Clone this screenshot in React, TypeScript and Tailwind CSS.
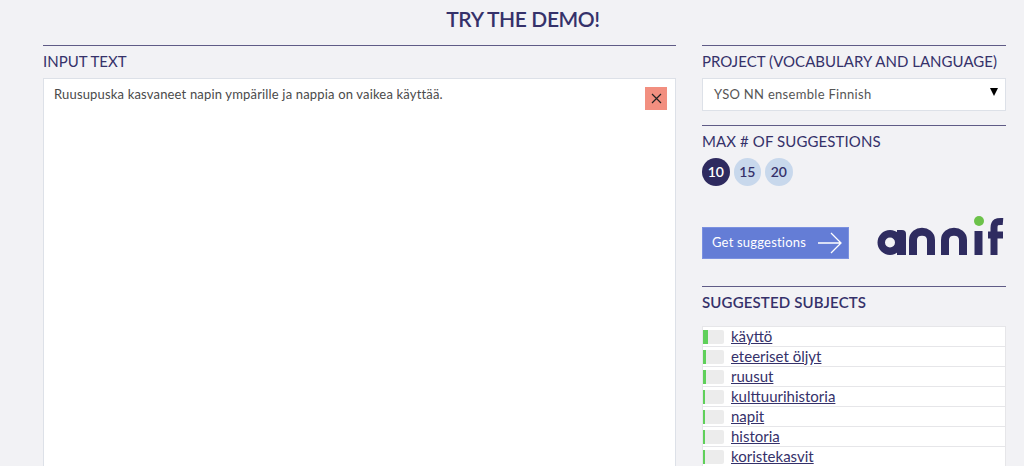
const subjects: [string, number][] = [
  ["käyttö", 5],
  ["eteeriset öljyt", 3],
  ["ruusut", 3],
  ["kulttuurihistoria", 2],
  ["napit", 2],
  ["historia", 1.5],
  ["koristekasvit", 1.5],
];

function Logo() {
  const c = "#2f2c60";
  return (
    <svg width="128" height="44" viewBox="0 0 128 44" className="block">
      <circle cx="13" cy="27.5" r="8.75" fill="none" stroke={c} strokeWidth="7.5" />
      <path d="M20 15h5q4 0 4 4v21h-9z" fill={c} />
      <path d="M36 40V25c0-11 18-11 18 0v15" stroke={c} strokeWidth="8" fill="none" />
      <path d="M68 40V25c0-11 18-11 18 0v15" stroke={c} strokeWidth="8" fill="none" />
      <path d="M101.5 16v24" stroke={c} strokeWidth="8" fill="none" />
      <circle cx="102" cy="6" r="5" fill="#6cc24a" />
      <path d="M117 40V13c0-6 3-7 9-6.5M111 20h15" stroke={c} strokeWidth="7" fill="none" />
    </svg>
  );
}

export default function App() {
  return (
    <div className="h-[466px] overflow-hidden bg-[#f2f2f5] text-[#35316a] font-['Lato','Liberation_Sans',sans-serif]">
      <h2 className="pt-[6px] h-[45px] text-center text-[21px] leading-[26px] font-semibold pl-[22px] tracking-[-0.4px]">TRY THE DEMO!</h2>
      <div className="flex gap-[26px] pl-[43px] pr-[18px]">
        <div className="w-[633px]">
          <div className="border-t border-[#5f5b86] pt-[4px] h-[33px] text-[15px] leading-[22px]">INPUT TEXT</div>
          <div className="relative h-[400px] bg-white border border-[#dde1e8] pl-[10px] pt-[6px] text-[13px] leading-[18px] tracking-[0.17px] text-[#4a4a4a]">
            Ruusupuska kasvaneet napin ympärille ja nappia on vaikea käyttää.
            <div className="absolute right-[8px] top-[8px] w-[22px] h-[23px] bg-[#f28f80] flex items-center justify-center">
              <svg width="11" height="11" viewBox="0 0 11 11"><path d="M1 1l9 9M10 1l-9 9" stroke="#222" strokeWidth="1.2" /></svg>
            </div>
          </div>
        </div>
        <div className="w-[304px]">
          <div className="border-t border-[#5f5b86] pt-[4px] h-[33px] text-[15px] leading-[22px] tracking-[0.03px] whitespace-nowrap">PROJECT (VOCABULARY AND LANGUAGE)</div>
          <div className="relative h-[33px] bg-white border border-[#dde1e8] pl-[11px] text-[13px] leading-[30px] tracking-[0.3px] text-[#555]">
            YSO NN ensemble Finnish
            <span className="absolute right-[7px] top-[9px] w-0 h-0 border-l-[4px] border-r-[4px] border-t-[8px] border-l-transparent border-r-transparent border-t-black"></span>
          </div>
          <div className="mt-[14px] border-t border-[#5f5b86] pt-[4px] h-[33px] text-[15px] leading-[22px] tracking-[0.1px]">MAX # OF SUGGESTIONS</div>
          <div className="flex gap-[4px] text-[14px] font-semibold h-[29px]">
            <div className="w-[27.5px] h-[27.5px] rounded-full bg-[#2e2a5f] text-white flex items-center justify-center">10</div>
            <div className="w-[27.5px] h-[27.5px] rounded-full bg-[#c8d8ec] flex items-center justify-center">15</div>
            <div className="w-[27.5px] h-[27.5px] rounded-full bg-[#c8d8ec] flex items-center justify-center">20</div>
          </div>
          <div className="mt-[28px] flex items-end justify-between h-[44px] pr-[1px]">
            <div className="w-[147px] h-[32px] bg-[#647dd6] border border-[#7b91e0] text-white text-[13px] tracking-[0.2px] flex items-center pl-[9px] gap-[11px]">
              <span className="whitespace-nowrap">Get suggestions</span>
              <svg width="26" height="24" viewBox="0 0 26 24" className="shrink-0"><path d="M1 12h23M14 2l10 10-10 10" stroke="#fff" strokeWidth="1.3" fill="none" /></svg>
            </div>
            <Logo />
          </div>
          <div className="mt-[27px] border-t border-[#5f5b86] pt-[4px] h-[40px] text-[15px] leading-[22px] font-semibold tracking-[0.15px]">SUGGESTED SUBJECTS</div>
          <div className="border border-[#e6e6e9] bg-white">
            {subjects.map(([name, w]) => (
              <div key={name} className="h-[20px] border-b border-[#e6e6e9] flex items-center">
                <div className="w-[21px] h-[14px] bg-[#ececec] rounded-r-[2px] shrink-0">
                  <div className="h-full bg-[#5fd05a]" style={{ width: w }}></div>
                </div>
                <a className="ml-[7px] mb-[2px] text-[15px] leading-[18px] underline text-[#35316a]">{name}</a>
              </div>
            ))}
          </div>
        </div>
      </div>
    </div>
  );
}
